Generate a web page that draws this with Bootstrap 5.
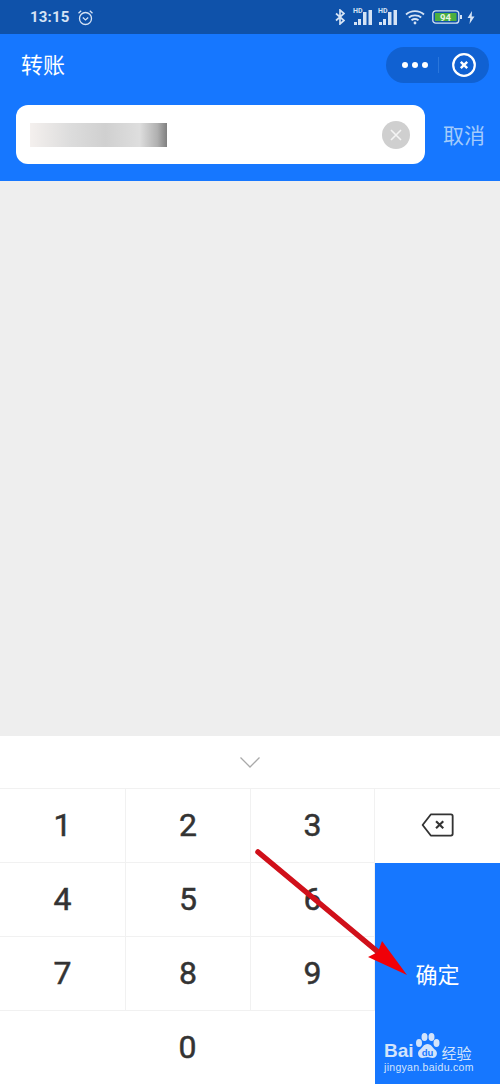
<!DOCTYPE html>
<html lang="zh">
<head>
    <meta charset="UTF-8">
    <meta name="viewport" content="width=device-width, initial-scale=1.0">
    <title>转账</title>
    <link href="https://cdn.jsdelivr.net/npm/bootstrap@5.3.3/dist/css/bootstrap.min.css" rel="stylesheet">
    <style>
        html, body { height: 100%; }
        body { font-family: "Noto Sans CJK SC", "Noto Sans", sans-serif; background: #fff; overflow: hidden; }
        .screen { width: 500px; height: 1084px; }
        .status-bar { height: 34px; background: #0f52aa; color: #d5e3f5; padding: 0 25px 0 30px; }
        .status-time { font: 700 15px/1 Roboto, sans-serif; letter-spacing: .2px; margin-right: 7px; }
        .signal-wrap { position: relative; width: 20px; height: 16px; margin-right: 5px; }
        .bt-icon { margin-right: 8px; }
        .wifi-icon { margin: 0 7px 0 2px; }
        .batt-icon { margin-right: 5px; }
        .hd-label { position: absolute; left: 0; top: -1px; font: 700 7px/1 Roboto, sans-serif; color: #d5e3f5; }
        .blue-head { height: 147px; background: #1677ff; }
        .title-row { height: 62px; margin-bottom: 9px; padding: 0 11px 0 21px; }
        .title-text { font-size: 22px; line-height: 1; color: #fff; margin-bottom: 4px; }
        .capsule { width: 103px; height: 36px; border-radius: 18px; background: #1061d2; padding: 0 13px 0 16px; }
        .capsule-line { width: 1px; height: 16px; background: #2a76dc; margin: 0 13px 0 10px; }
        .dots { gap: 4px; }
        .dots i { display: block; width: 6px; height: 6px; border-radius: 50%; background: #fff; }
        .search-row { padding: 0 16px; }
        .search-box { width: 409px; height: 59px; background: #fff; border-radius: 12px; padding: 0 15px 0 14px; }
        .blur-text { width: 137px; height: 24px; background: linear-gradient(90deg, #f4f0ee 0, #dcdcdc 30%, #d0d0d0 55%, #dedede 80%, #b0b0b0 93%, #808080 100%); filter: blur(.6px); margin-top: 1px; }
        .clear-dot { width: 28px; height: 28px; border-radius: 50%; background: #cfcfcf; }
        .cancel-text { font-size: 21px; line-height: 1; color: #a3cbfb; margin-left: 18px; white-space: nowrap; }
        .gray-body { height: 555px; background: #eeeeee; }
        .keyboard { height: 348px; }
        .fold-row { height: 53px; border-bottom: 1px solid #f1f1f1; }
        .keypad { display: grid; grid-template-columns: 126px 125px 124px 125px; grid-template-rows: 74px 74px 74px 73px; height: 295px; }
        .numkey { font: 400 32px/1 Roboto, sans-serif; -webkit-text-stroke: .5px #333; color: #333; border-right: 1px solid #f1f1f1; border-bottom: 1px solid #f1f1f1; padding-bottom: 2px; }
        .zero-key { grid-column: 1 / span 3; border-right: 0; border-bottom: 0; }
        .back-key { grid-column: 4; grid-row: 1; border-right: 0; border-bottom: 0; padding-bottom: 2px; }
        .ok-key { grid-column: 4; grid-row: 2 / span 3; background: #1677ff; color: #fff; font-size: 22px; }
        .arrow-over { position: absolute; left: 250px; top: 845px; width: 170px; height: 140px; pointer-events: none; }
        .wm { position: absolute; left: 384px; top: 1032px; width: 110px; color: #d3e4fb; pointer-events: none; }
        .wm-main { font: 700 19px/1 "Liberation Sans", sans-serif; }
        .wm-cn { font-size: 15px; line-height: 1; margin-left: 1px; }
        .wm-url { font: 400 10.5px/1 "Liberation Sans", sans-serif; letter-spacing: .3px; margin-top: 2px; }
    </style>
</head>
<body>

    <div class="screen position-relative">

        <div class="status-bar d-flex align-items-center justify-content-between">
            <div class="d-flex align-items-center">
                <span class="status-time">13:15</span>
                <svg width="17" height="17" viewBox="0 0 17 17" fill="none" stroke="#d5e3f5" stroke-width="1.3">
                    <circle cx="8.5" cy="9.5" r="6"/>
                    <path d="M5.8 8.6l2.7 2.4 2.7-2.4M1.5 4.2L4.2 1.8M15.5 4.2L12.8 1.8"/>
                </svg>
            </div>
            <div class="d-flex align-items-center">
                <svg class="bt-icon" width="10" height="16" viewBox="0 0 10 16" fill="none" stroke="#d5e3f5" stroke-width="1.7">
                    <path d="M1 4.500l8 7-4 3.500V1l4 3.500-8 7"/>
                </svg>
                <div class="signal-wrap">
                    <span class="hd-label">HD</span>
                    <svg class="position-absolute bottom-0 end-0" width="20" height="15" viewBox="0 0 20 15" fill="#d5e3f5">
                        <rect x="1" y="12" width="3" height="3"/><rect x="5" y="9" width="3" height="6"/><rect x="10" y="2" width="3.500" height="13"/><rect x="15.500" y="0" width="3.500" height="15"/>
                    </svg>
                </div>
                <div class="signal-wrap">
                    <span class="hd-label">HD</span>
                    <svg class="position-absolute bottom-0 end-0" width="20" height="15" viewBox="0 0 20 15" fill="#d5e3f5">
                        <rect x="1" y="12" width="3" height="3"/><rect x="5" y="9" width="3" height="6"/><rect x="10" y="2" width="3.500" height="13"/><rect x="15.500" y="0" width="3.500" height="15"/>
                    </svg>
                </div>
                <svg class="wifi-icon" width="20" height="16" viewBox="0 0 20 16" fill="none" stroke="#d5e3f5" stroke-width="1.800">
                    <path d="M1 5.500C6 1 14 1 19 5.500M3.800 8.500C7 5.700 13 5.700 16.200 8.500M6.500 11.200C8.500 9.800 11.500 9.800 13.500 11.200"/>
                    <circle cx="10" cy="14" r="1.400" fill="#d5e3f5" stroke="none"/>
                </svg>
                <svg class="batt-icon" width="30" height="14" viewBox="0 0 30 14">
                    <rect x=".8" y=".8" width="26" height="12.400" rx="3" fill="none" stroke="#d5e3f5" stroke-width="1.300"/>
                    <rect x="3" y="3" width="21.500" height="8" fill="#4caf3f"/>
                    <rect x="28" y="5" width="2" height="4" fill="#d5e3f5"/>
                    <text x="13.500" y="10.500" text-anchor="middle" font-family="Roboto, sans-serif" font-size="9.500" font-weight="700" fill="#e9f5e4">94</text>
                </svg>
                <svg width="8" height="13" viewBox="0 0 8 13" fill="#d5e3f5"><path d="M5 0L.5 7h2.800L2.500 13 7.500 5.500H4.700z"/></svg>
            </div>
        </div>

        <div class="blue-head">
            <div class="title-row d-flex align-items-center justify-content-between">
                <span class="title-text">转账</span>
                <div class="capsule d-flex align-items-center">
                    <div class="dots d-flex"><i></i><i></i><i></i></div>
                    <div class="capsule-line"></div>
                    <svg width="24" height="24" viewBox="0 0 24 24" fill="none" stroke="#fff">
                        <circle cx="12" cy="12" r="10.800" stroke-width="2.200"/>
                        <path d="M8.800 8.800l6.400 6.400M15.200 8.800l-6.400 6.400" stroke-width="2.400"/>
                    </svg>
                </div>
            </div>
            <div class="search-row d-flex align-items-center">
                <div class="search-box d-flex align-items-center justify-content-between flex-shrink-0">
                    <div class="blur-text"></div>
                    <div class="clear-dot d-flex align-items-center justify-content-center">
                        <svg width="12" height="12" viewBox="0 0 12 12" stroke="#f4f4f4" stroke-width="1.600"><path d="M1 1l10 10M11 1L1 11"/></svg>
                    </div>
                </div>
                <span class="cancel-text">取消</span>
            </div>
        </div>

        <div class="gray-body"></div>

        <div class="keyboard">
            <div class="fold-row d-flex align-items-center justify-content-center">
                <svg width="20" height="11" viewBox="0 0 20 11" fill="none" stroke="#a9a9a9" stroke-width="1.300"><path d="M.5 .5L10 10 19.500 .5"/></svg>
            </div>
            <div class="keypad">
                <div class="numkey d-flex align-items-center justify-content-center">1</div>
                <div class="numkey d-flex align-items-center justify-content-center">2</div>
                <div class="numkey d-flex align-items-center justify-content-center">3</div>
                <div class="back-key d-flex align-items-center justify-content-center">
                    <svg width="33" height="24" viewBox="0 0 34 25" fill="none" stroke="#333" stroke-width="1.900" stroke-linejoin="round">
                        <path d="M10 1.500H31a1.800 1.800 0 0 1 1.800 1.800V21.700a1.800 1.800 0 0 1-1.800 1.800H10L1.500 12.500z"/>
                        <path d="M15.500 8.500l7.500 7.500M23 8.500l-7.500 7.500" stroke-width="2.200"/>
                    </svg>
                </div>
                <div class="numkey d-flex align-items-center justify-content-center">4</div>
                <div class="numkey d-flex align-items-center justify-content-center">5</div>
                <div class="numkey d-flex align-items-center justify-content-center">6</div>
                <div class="ok-key d-flex align-items-center justify-content-center">确定</div>
                <div class="numkey d-flex align-items-center justify-content-center">7</div>
                <div class="numkey d-flex align-items-center justify-content-center">8</div>
                <div class="numkey d-flex align-items-center justify-content-center">9</div>
                <div class="numkey zero-key d-flex align-items-center justify-content-center">0</div>
            </div>
        </div>

        <!-- red annotation arrow over the keypad -->
        <svg class="arrow-over" viewBox="0 0 170 140">
            <path d="M8 7L128 107" stroke="#d0101a" stroke-width="5.500" stroke-linecap="round"/>
            <path d="M157 130L118 112 128 107 132 96Z" fill="#f00008"/>
        </svg>

        <div class="wm">
            <div class="d-flex align-items-end">
                <span class="wm-main">Bai</span>
                <svg width="27" height="28" viewBox="0 0 26 28" fill="#d3e4fb">
                    <ellipse cx="4.500" cy="11" rx="3" ry="4"/><ellipse cx="10" cy="5" rx="3" ry="4"/><ellipse cx="17" cy="5" rx="3" ry="4"/><ellipse cx="22" cy="11" rx="3" ry="4"/>
                    <path d="M13 12c4 0 5 4 8 6 3 3 1 8-3 8-2 0-3-1-5-1s-3 1-5 1c-4 0-6-5-3-8 3-2 4-6 8-6z"/>
                    <text x="13" y="23.500" text-anchor="middle" font-family="Liberation Sans, sans-serif" font-size="9.500" font-weight="700" fill="#1677ff">du</text>
                </svg>
                <span class="wm-cn">经验</span>
            </div>
            <div class="wm-url">jingyan.baidu.com</div>
        </div>

    </div>

</body>
</html>
